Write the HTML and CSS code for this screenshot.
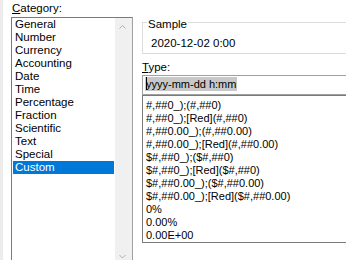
FILE: index.html
```html
<!DOCTYPE html>
<html lang="en">
<head>
    <meta charset="UTF-8">
    <title>Format Cells - Number</title>
    <link rel="stylesheet" href="styles.css">
</head>
<body>

<!-- Pestaña Number del cuadro Format Cells -->
    <div class="dialog">

        <!-- Lista de categorías -->
        <div class="category">
            <div class="caption"><u>C</u>ategory:</div>
            <div class="cat-list">
                <ul class="cat-items">
                    <li>General</li>
                    <li>Number</li>
                    <li>Currency</li>
                    <li>Accounting</li>
                    <li>Date</li>
                    <li>Time</li>
                    <li>Percentage</li>
                    <li>Fraction</li>
                    <li>Scientific</li>
                    <li>Text</li>
                    <li>Special</li>
                    <li class="selected">Custom</li>
                </ul>
                <div class="scrollbar">
                    <svg viewBox="0 0 17 17"><polyline points="4.5,10.5 7.5,7.5 10.5,10.5" /></svg>
                    <svg viewBox="0 0 17 17"><polyline points="4.5,8 7.5,11 10.5,8" /></svg>
                </div>
            </div>
        </div>

        <!-- Muestra, tipo y lista de formatos -->
        <div class="details">
            <div class="sample">
                <div class="sample-title">Sample</div>
                <div class="sample-value">2020-12-02 0:00</div>
            </div>

            <div class="type-caption"><u>T</u>ype:</div>
            <div class="type-input"><span class="sel"><span class="caret"></span>yyyy-mm-dd h:mm</span></div>

            <ul class="format-list">
                <li>#,##0_);(#,##0)</li>
                <li>#,##0_);[Red](#,##0)</li>
                <li>#,##0.00_);(#,##0.00)</li>
                <li>#,##0.00_);[Red](#,##0.00)</li>
                <li>$#,##0_);($#,##0)</li>
                <li>$#,##0_);[Red]($#,##0)</li>
                <li>$#,##0.00_);($#,##0.00)</li>
                <li>$#,##0.00_);[Red]($#,##0.00)</li>
                <li>0%</li>
                <li>0.00%</li>
                <li>0.00E+00</li>
            </ul>
        </div>

    </div>

</body>
</html>
```

FILE: styles.css
```css
/* Estilos generales */
    html, body {
        margin: 0;
        padding: 0;
    }

    body {
        width: 346px;
        height: 260px;
        overflow: hidden;
        background: #fff;
        font-family: 'Liberation Sans', Arial, sans-serif;
        font-size: 11.5px;
        color: #000;
    }

    .dialog {
        display: flex;
        height: 260px;
        border-left: 3px solid #ececec;
        box-sizing: border-box;
    }

/* Columna de categorías */
    .category {
        flex: none;
        width: 122px;
        margin-left: 8px;
        padding-top: 1px;
    }

    .caption {
        line-height: 14px;
        margin-left: 1px;
    }

    .cat-list {
        display: flex;
        height: 246px;
        margin-top: 2px;
        padding-left: 1px;
        border: 1px solid #7a7a7a;
        border-right-color: #a0a0a0;
    }

    .cat-items {
        list-style: none;
        margin: 0 1px 0 0;
        padding: 0;
        width: 101px;
    }

    .cat-items li {
        line-height: 13px;
        padding-left: 2px;
        white-space: nowrap;
    }

    .cat-items li.selected {
        background: #0078d7;
        color: #fff;
    }

    .scrollbar {
        width: 17px;
        background: #f0f0f0;
        display: flex;
        flex-direction: column;
        justify-content: space-between;
    }

    .scrollbar svg {
        display: block;
        width: 17px;
        height: 17px;
    }

    .scrollbar polyline {
        fill: none;
        stroke: #b0b0b0;
        stroke-width: 1;
    }

/* Columna de detalles */
    .details {
        flex: none;
        width: 220px;
        margin-left: 9px;
    }

    .sample {
        margin-top: 22px;
        padding-bottom: 3px;
        border: 1px solid #dcdcdc;
    }

    .sample-title {
        width: max-content;
        margin: -6px 0 0 4px;
        padding: 0 1px;
        line-height: 14px;
        background: #fff;
    }

    .sample-value {
        margin-top: 5px;
        padding-left: 8px;
        line-height: 14px;
    }

    .type-caption {
        margin-top: 6px;
        line-height: 14px;
    }

    .type-input {
        height: 17px;
        margin-top: 1px;
        padding: 1px 0 0 2px;
        border: 1px solid #a0a0a0;
        font-size: 11px;
    }

    .type-input .sel {
        display: inline-block;
        vertical-align: top;
        line-height: 14px;
        padding: 0 1px;
        background: #c8c8c8;
    }

    .caret {
        display: inline-block;
        vertical-align: top;
        width: 1px;
        height: 13px;
        margin-right: -1px;
        background: #000;
    }

    .format-list {
        list-style: none;
        margin: 0;
        padding: 3px 0 0 3px;
        border: 1px solid #7a7a7a;
        font-size: 11px;
    }

    .format-list li {
        line-height: 13px;
        white-space: nowrap;
    }
```
